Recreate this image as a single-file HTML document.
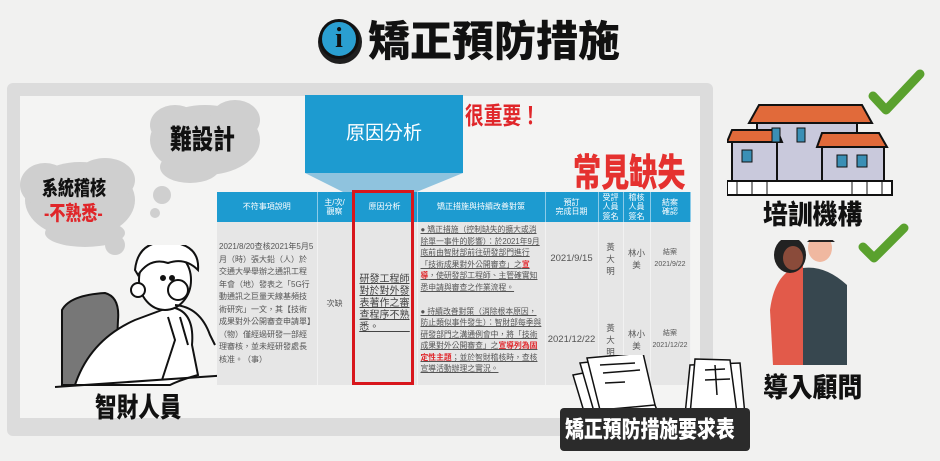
<!DOCTYPE html>
<html><head><meta charset="utf-8"><style>
*{margin:0;padding:0;box-sizing:border-box}
body{width:940px;height:461px;overflow:hidden;background:#f1f1f0;font-family:"Liberation Sans","Noto Sans CJK TC",sans-serif;position:relative}
.a{position:absolute}
.t{font-weight:900;color:#111;white-space:nowrap;transform-origin:0 0}
table{border-collapse:collapse;font-size:8px;color:#555;table-layout:fixed}
th{background:#1d9bd0;color:#fff;font-weight:normal;font-size:8px;height:30px;border-right:1px solid #8ccbe8;line-height:9.5px}
td{background:#e6e6e6;vertical-align:middle;border-right:1px solid #f2f2f2;text-align:center;line-height:12px;overflow:hidden}
.n{padding:0 4px;font-size:8.5px}
</style></head><body>
<div class="a" style="left:318px;top:20px;width:44px;height:44px;border-radius:50%;background:#1f1f1f"></div>
<div class="a" style="left:319px;top:19px;width:40px;height:40px;border-radius:50%;background:#2a9fd1;border:3px solid #111;color:#111;font:900 28px 'Liberation Serif',serif;text-align:center;line-height:34px">i</div>
<div class="a t" style="left:368px;top:18px;font-size:42px;line-height:48px">矯正預防措施</div>
<div class="a" style="left:7px;top:83px;width:706px;height:353px;background:#dcdcdc;border-radius:6px"></div>
<div class="a" style="left:20px;top:96px;width:680px;height:322px;background:#f4f4f3"></div>
<svg class="a" style="left:0;top:95px" width="300" height="160">
<g fill="#cfcfcf">
<ellipse cx="205" cy="45" rx="55" ry="35"/><ellipse cx="175" cy="30" rx="25" ry="20"/><ellipse cx="235" cy="25" rx="25" ry="20"/><ellipse cx="190" cy="72" rx="30" ry="16"/>
<circle cx="162" cy="100" r="9"/><circle cx="155" cy="118" r="5"/>
<ellipse cx="80" cy="105" rx="55" ry="38"/><ellipse cx="45" cy="90" rx="25" ry="22"/><ellipse cx="105" cy="85" rx="30" ry="22"/><ellipse cx="85" cy="138" rx="40" ry="14"/>
<circle cx="115" cy="150" r="10"/>
</g></svg>
<div class="a t" style="left:170px;top:118px;font-size:27px;transform:scaleX(.8)">難設計</div>
<div class="a t" style="left:42px;top:172px;font-size:20px;transform:scaleX(.8)">系統稽核</div>
<div class="a t" style="left:44px;top:197px;font-size:20px;color:#e0262a;transform:scaleX(.8)">-不熟悉-</div>
<svg class="a" style="left:50px;top:245px" width="180" height="145" fill="none" stroke="#111" stroke-width="2">
<path d="M12 140 L12 65 Q20 50 55 48 Q70 52 68 75 L65 140 Z" fill="#777"/>
<path d="M25 140 Q40 95 85 75 L120 62 Q145 65 142 100 L148 130 Q130 135 120 140 Z" fill="#fff"/>
<path d="M118 72 L125 95 L112 135 M130 72 L138 100"/>
<ellipse cx="115" cy="35" rx="26" ry="30" fill="#fff"/>
<path d="M85 25 Q88 -5 120 -3 Q150 0 148 25 Q135 12 118 18 Q100 12 88 30Z" fill="#fff"/>
<circle cx="128" cy="45" r="10" fill="#fff"/><circle cx="113" cy="33" r="2" fill="#111"/><circle cx="122" cy="33" r="2" fill="#111"/>
<circle cx="88" cy="45" r="7" fill="#fff"/>
<path d="M125 60 Q150 62 160 90 L165 100"/>
<path d="M5 142 L180 130"/>
</svg>
<div class="a t" style="left:95px;top:386px;font-size:27px;transform:scaleX(.8)">智財人員</div>
<div class="a" style="left:305px;top:95px;width:158px;height:78px;background:#1d9bd0;color:#fff;font-size:19px;text-align:center;line-height:78px">原因分析</div>
<svg class="a" style="left:305px;top:173px" width="158" height="20"><polygon points="0,0 158,0 109,20 40,20" fill="#8fc3de"/></svg>
<div class="a t" style="left:465px;top:96px;font-size:24px;color:#e0262a;font-weight:700;transform:scaleX(.78)">很重要！</div>
<div class="a t" style="left:573px;top:142px;font-size:38px;color:#e5312f;transform:scaleX(.74)">常見缺失</div>
<table class="a" style="left:217px;top:192px;width:473px">
<colgroup><col style="width:100px"><col style="width:35px"><col style="width:65px"><col style="width:128px"><col style="width:53px"><col style="width:25px"><col style="width:27px"><col style="width:40px"></colgroup>
<tr><th>不符事項說明</th><th>主/次/<br>觀察</th><th>原因分析</th><th>矯正措施與持續改善對策</th><th>預訂<br>完成日期</th><th class="n" style="font-size:8px">受評人員簽名</th><th class="n" style="font-size:8px">稽核人員簽名</th><th>結案<br>確認</th></tr>
<tr style="height:73px"><td rowspan="2" style="text-align:left;padding:0 2px;font-size:8px;line-height:12.5px">2021/8/20查核2021年5月5月（時）張大鉛（人）於交通大學舉辦之通訊工程年會（地）發表之「5G行動通訊之巨量天線基頻技術研究」一文，其【技術成果對外公開審查申請單】（物）僅經過研發一部經理審核，並未經研發處長核准。（事）</td><td rowspan="2">次缺</td><td rowspan="2" style="font-size:10px;line-height:12px;color:#444;padding:0;white-space:nowrap;text-align:center"><span style="text-decoration:underline">研發工程師<br>對於對外發<br>表著作之審<br>查程序不熟<br>悉。&nbsp;&nbsp;&nbsp;&nbsp;&nbsp;&nbsp;&nbsp;&nbsp;&nbsp;&nbsp;&nbsp;</span></td><td style="text-align:left;font-size:7.8px;line-height:11.5px;padding:1px 3px;text-decoration:underline">● 矯正措施（控制缺失的擴大或消除單一事件的影響）：於2021年9月底前由智財部前往研發部門進行「技術成果對外公開審查」之<b style="color:#e0262a">宣導</b>，使研發部工程師、主管確實知悉申請與審查之作業流程。</td><td style="font-size:9.5px">2021/9/15</td><td class="n">黃大明</td><td class="n">林小美</td><td style="font-size:7px">結案<br>2021/9/22</td></tr>
<tr style="height:90px"><td style="text-align:left;font-size:7.8px;line-height:11.5px;padding:1px 3px;text-decoration:underline">● 持續改善對策（消除根本原因，防止類似事件發生）：智財部每季與研發部門之溝通例會中，將「技術成果對外公開審查」之<b style="color:#e0262a">宣導列為固定性主題</b>；並於智財稽核時，查核宣導活動辦理之實況。</td><td style="font-size:9.5px">2021/12/22</td><td class="n">黃大明</td><td class="n">林小美</td><td style="font-size:7px">結案<br>2021/12/22</td></tr>
</table>
<div class="a" style="left:352px;top:190px;width:62px;height:195px;border:3px solid #d8161c"></div>
<svg class="a" style="left:565px;top:355px" width="190" height="60" fill="#fff" stroke="#111" stroke-width="1.5">
<path d="M8 20 L60 10 L80 60 L20 60Z"/><path d="M15 8 L70 2 L92 55 L30 60Z"/>
<path d="M22 3 L78 -2 L90 50 L35 55Z"/><path d="M35 10 L70 8 M38 18 L75 15 M40 28 L60 27"/>
<path d="M125 10 L175 8 L180 60 L120 60Z"/><path d="M130 4 L165 5 L172 58 L125 60Z"/><path d="M140 15 L160 14 M140 25 L165 24 M150 10 L152 40"/>
</svg>
<div class="a" style="left:560px;top:408px;width:190px;height:43px;background:#2b2b2b;border-radius:4px"></div>
<div class="a" style="left:565px;top:408px;font-size:23px;font-weight:900;color:#fff;line-height:43px;white-space:nowrap;transform:scaleX(.82);transform-origin:0 0">矯正預防措施要求表</div>
<svg class="a" style="left:727px;top:95px" width="170" height="105">
<rect x="30" y="28" width="100" height="62" fill="#c9c9dc" stroke="#111" stroke-width="2"/>
<polygon points="32,10 135,10 145,28 22,28" fill="#e16a3a" stroke="#111" stroke-width="2"/>
<rect x="5" y="45" width="45" height="45" fill="#c9c9dc" stroke="#111" stroke-width="2"/>
<polygon points="5,35 50,35 55,47 0,47" fill="#e16a3a" stroke="#111" stroke-width="2"/>
<rect x="95" y="50" width="62" height="40" fill="#c9c9dc" stroke="#111" stroke-width="2"/>
<polygon points="95,38 152,38 160,52 90,52" fill="#e16a3a" stroke="#111" stroke-width="2"/>
<g fill="#3a8fb5" stroke="#111"><rect x="15" y="55" width="10" height="12"/><rect x="45" y="33" width="8" height="14"/><rect x="70" y="33" width="8" height="14"/><rect x="110" y="60" width="10" height="12"/><rect x="130" y="60" width="10" height="12"/></g>
<rect x="0" y="86" width="165" height="14" fill="#fff" stroke="#111" stroke-width="2"/>
<path d="M10 86 V100 M25 86 V100 M40 86 V100 M125 86 V100 M140 86 V100 M155 86 V100" stroke="#111"/>
</svg>
<svg class="a" style="left:868px;top:68px" width="60" height="50"><path d="M5 28 L18 42 L52 6" stroke="#5aa12e" stroke-width="9" fill="none" stroke-linecap="round" stroke-linejoin="round"/></svg>
<div class="a t" style="left:763px;top:193px;font-size:27px;transform:scaleX(.92)">培訓機構</div>
<svg class="a" style="left:765px;top:240px" width="100" height="128">
<path d="M8 125 L5 70 Q10 30 38 25 L40 125Z" fill="#e25a4a"/>
<path d="M38 125 L38 28 Q60 25 82 45 L82 125Z" fill="#37474f"/>
<ellipse cx="25" cy="15" rx="16" ry="18" fill="#222"/><ellipse cx="28" cy="18" rx="10" ry="12" fill="#8a4b3a"/>
<ellipse cx="55" cy="8" rx="12" ry="14" fill="#f0b8a0"/><path d="M42 2 Q55 -12 70 2Z" fill="#222"/>
</svg>
<svg class="a" style="left:858px;top:222px" width="55" height="45"><path d="M5 25 L16 36 L46 6" stroke="#5aa12e" stroke-width="9" fill="none" stroke-linecap="round" stroke-linejoin="round"/></svg>
<div class="a t" style="left:763px;top:366px;font-size:27px;transform:scaleX(.92)">導入顧問</div>
</body></html>
